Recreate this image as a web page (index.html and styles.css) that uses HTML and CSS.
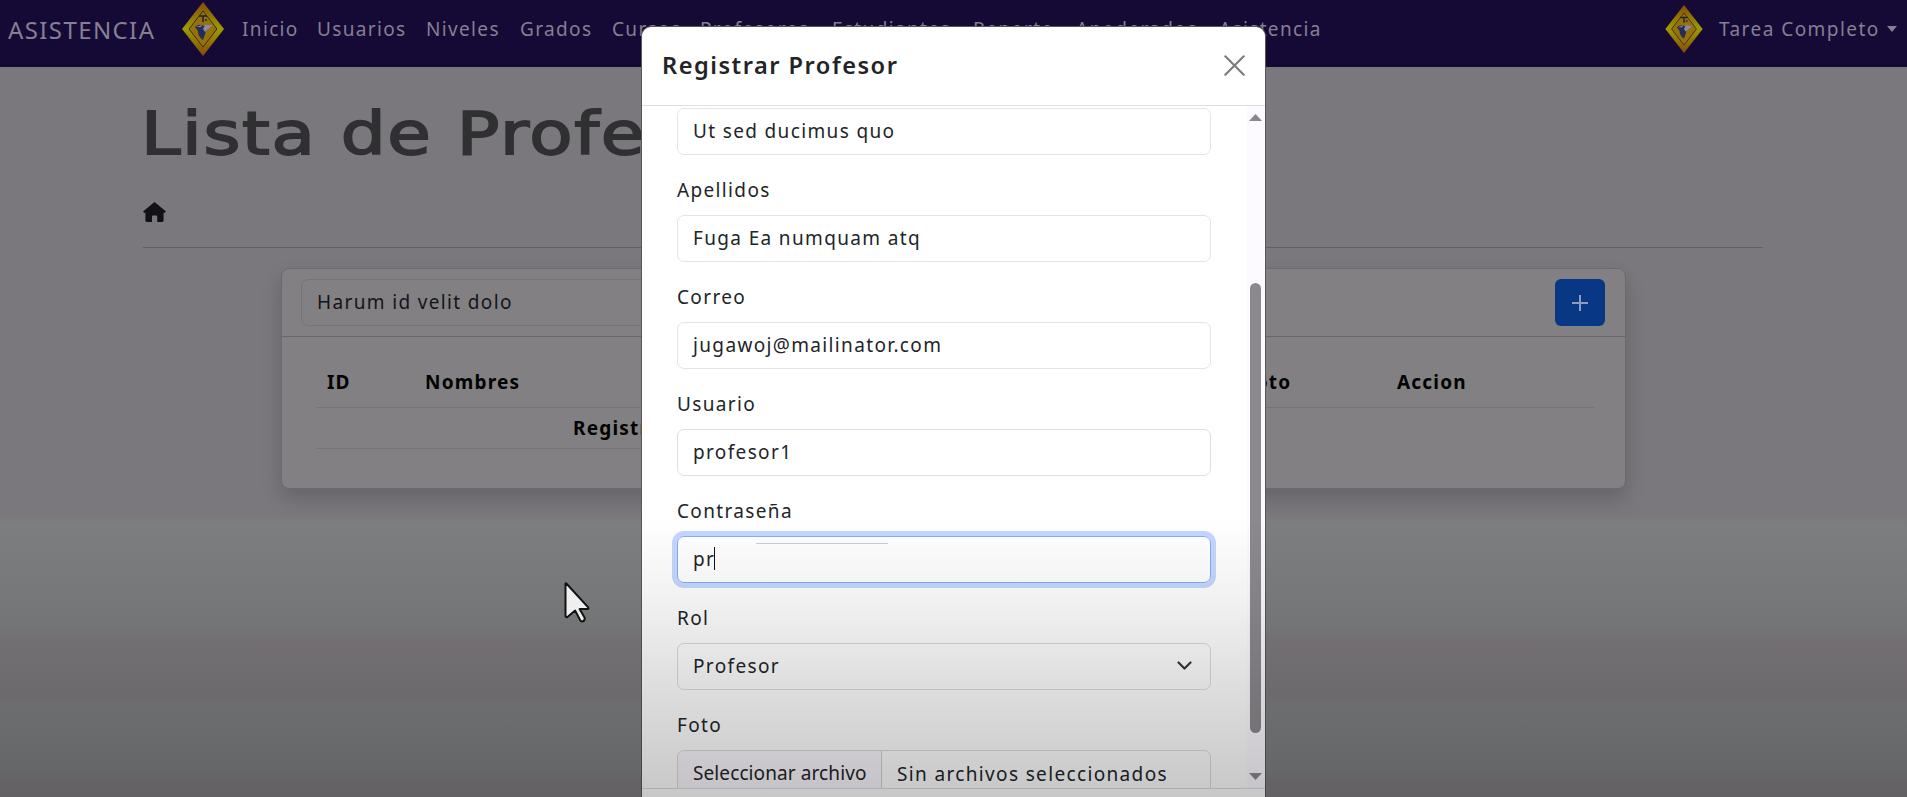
FILE: index.html
```html
<!DOCTYPE html>
<html lang="es">
<head>
<meta charset="utf-8">
<title>Asistencia</title>
<link rel="stylesheet" href="styles.css">
</head>
<body>
<svg class="defs" width="0" height="0">
  <defs>
    <linearGradient id="gold" x1="0" y1="0" x2="0" y2="1">
      <stop offset="0" stop-color="#88490b"/>
      <stop offset=".5" stop-color="#9c9b05"/>
      <stop offset="1" stop-color="#884808"/>
    </linearGradient>
    <symbol id="crest" viewBox="0 0 42 54">
      <path d="M21 0 42 27 21 54 0 27z" fill="url(#gold)"/>
      <path d="M21 9 35 27 21 45 7 27z" fill="#96710c" stroke="#38300f" stroke-width="1"/>
      <path d="M17 14h8M21 14v6M23 18h2" stroke="#20242c" stroke-width="1.6" fill="none"/>
      <path d="M13 25q4-4 9-1l8-1-6 6-3 9q-5-3-5-9z" fill="#252d57"/>
      <path d="M23 23l8 0-8 7-2-3zM14 25l6-2-1 2z" fill="#8b8b9c"/>
    </symbol>
  </defs>
</svg>
<div class="page">
  <nav class="navbar">
    <span class="brand">ASISTENCIA</span>
    <svg class="crest"><use href="#crest"/></svg>
    <div class="links">
      <span>Inicio</span><span>Usuarios</span><span>Niveles</span><span>Grados</span><span>Cursos</span><span>Profesores</span><span>Estudiantes</span><span>Reporte</span><span>Apoderados</span><span>Asistencia</span>
    </div>
    <div class="account">
      <svg class="avatar"><use href="#crest"/></svg>
      <span>Tarea Completo</span>
      <i class="caret"></i>
    </div>
  </nav>
  <main class="content">
    <h1 class="title">Lista de Profesores</h1>
    <svg class="home" viewBox="0 0 23 20"><path d="M11.5 0 23 9.6 21.6 11 20.6 10.4V18.6Q20.6 20 19.2 20H14.2V14.2Q14.2 13.4 13.4 13.4H9.8Q9 13.4 9 14.2V20H3.8Q2.4 20 2.4 18.6V10.4L1.4 11 0 9.6z" fill="#121116"/></svg>
    <hr class="rule">
    <section class="card">
      <header class="card-head">
        <div class="search">Harum id velit dolo</div>
        <button class="add"><svg width="18" height="18" viewBox="0 0 18 18"><path d="M9 1v16M1 9h16" stroke="#8c9cba" stroke-width="2"/></svg></button>
      </header>
      <div class="table">
        <div class="row head"><span>ID</span><span>Nombres</span><span>Correo</span><span>Foto</span><span>Accion</span></div>
        <div class="row empty">Registros</div>
      </div>
    </section>
  </main>
</div>

<div class="modal">
  <header class="modal-head">
    <h2 class="modal-title">Registrar Profesor</h2>
    <svg width="21" height="21" viewBox="0 0 21 21"><path d="M1.3 1.3l18.4 18.4M19.7 1.3L1.3 19.7" stroke="#7d7d7d" stroke-width="2.2" stroke-linecap="round"/></svg>
  </header>
  <div class="modal-body">
    <form class="form">
      <div class="control">Ut sed ducimus quo</div>
      <label class="label">Apellidos</label>
      <div class="control">Fuga Ea numquam atq</div>
      <label class="label">Correo</label>
      <div class="control">jugawoj@mailinator.com</div>
      <label class="label">Usuario</label>
      <div class="control lilac">profesor1</div>
      <label class="label">Contraseña</label>
      <div class="control focus">pr<i class="text-cursor"></i><i class="hint"></i></div>
      <label class="label">Rol</label>
      <div class="control select">Profesor<svg width="15" height="10" viewBox="0 0 15 10"><path d="M1.5 1.5l6 6 6-6" fill="none" stroke="#343a40" stroke-width="2.2" stroke-linecap="round" stroke-linejoin="round"/></svg></div>
      <label class="label">Foto</label>
      <div class="control file"><span class="pick">Seleccionar archivo</span><span>Sin archivos seleccionados</span></div>
    </form>
    <div class="scroll">
      <svg class="arrow" viewBox="0 0 13 7"><path d="M6.5 0 13 7H0z" fill="#8a888c"/></svg>
      <div class="thumb"></div>
      <svg class="arrow" viewBox="0 0 13 7"><path d="M6.5 7 13 0H0z" fill="#8a888c"/></svg>
    </div>
  </div>
  <footer class="modal-foot"></footer>
</div>
<div class="shade"></div>
<svg class="pointer" viewBox="0 0 26 41"><path d="M1.5 2.2Q1.5.6 2.8 2L24.2 25.4Q25 27 23.2 27H15.6L20.8 36Q21 38.5 18.6 39.4 17 39.6 16.2 38.2L11.2 28.6 3.4 35Q1.5 35.8 1.5 33.6z" fill="#efeff0" stroke="#121212" stroke-width="2" stroke-linejoin="round"/></svg>
</body>
</html>
```
FILE: styles.css
```css
* { box-sizing: border-box; }
body {
  margin: 0;
  width: 1907px;
  height: 797px;
  overflow: hidden;
  position: relative;
  background: linear-gradient(#7a787d 515px, #7d7e7f 525px, #7d7e7f 628px, #7e7a7d 640px, #7e7b7e 697px, #7f8081 708px, #7f8081 770px, #7f7c7f 782px);
  font-family: "Noto Sans", sans-serif;
  font-size: 19px;
  letter-spacing: 1.35px;
  color: #212529;
}
.defs { position: absolute; }
.page { height: 797px; overflow: hidden; }

.navbar {
  height: 67px;
  padding: 0 10px 9px 8px;
  display: flex;
  align-items: center;
  background: #150a35;
  color: #867f92;
  white-space: nowrap;
}
.brand { width: 174px; font-size: 24px; letter-spacing: 1.4px; }
.crest { width: 42px; height: 54px; margin-right: 18px; flex: none; }
.links {
  display: grid;
  grid-template-columns: 75px 109px 94px 92px 88px 132px 141px 103px 143px 110px;
}
.account { margin-left: auto; display: flex; align-items: center; }
.avatar { width: 38px; height: 48px; margin-right: 16px; }
.account span { width: 168px; letter-spacing: 1.45px; }
.caret {
  border: 5.5px solid transparent;
  border-top: 6px solid #867f92;
  border-bottom: 0;
}

.content { padding: 0 144px 0 143px; }
.title {
  margin: 0;
  padding-top: 32px;
  height: 135px;
  font: 400 59px/70px "DejaVu Sans", sans-serif;
  letter-spacing: 1.4px;
  color: #303033;
  -webkit-text-stroke: 1.8px #303033;
  transform: scaleX(1.2);
  transform-origin: left;
  white-space: nowrap;
  margin-left: -2px;
}
.home { display: block; width: 23px; height: 20px; }
.rule { margin: 25px 0 20px; border: 0; border-top: 1px solid #605f64; }

.card {
  width: 1345px;
  height: 221px;
  margin-left: 138px;
  border: 1px solid #6c6a6e;
  border-radius: 8px;
  background: #828082;
  box-shadow: 0 10px 20px rgba(0, 0, 0, .17);
}
.card-head {
  height: 68px;
  padding: 10px 20px 10px 19px;
  display: flex;
  justify-content: space-between;
  border-bottom: 1px solid #68666a;
}
.search {
  width: 620px;
  height: 47px;
  padding-left: 15px;
  line-height: 45px;
  border: 1px solid #757377;
  border-radius: 7px;
  color: #15141a;
}
.add {
  width: 50px;
  height: 47px;
  padding: 0;
  border: 0;
  border-radius: 6px;
  background: #083885;
  display: grid;
  place-items: center;
}
.table { padding: 30px 31px 0 34px; color: #020203; font-weight: 700; letter-spacing: 1.2px; }
.row { border-bottom: 1px solid #767477; line-height: 41px; height: 41px; }
.head {
  display: grid;
  grid-template-columns: 98px 400px 419px 153px 1fr;
  padding-left: 11px;
  line-height: 30px;
}
.empty { padding-left: 257px; width: 800px; }

.modal {
  position: absolute;
  left: 642px;
  top: 27px;
  width: 623px;
  height: 790px;
  border-radius: 9px;
  background: #fff;
  overflow: hidden;
  box-shadow: 0 0 0 1px #59575c;
}
.modal-head {
  height: 79px;
  padding: 0 20px 2px;
  display: flex;
  align-items: center;
  justify-content: space-between;
  border-bottom: 1px solid #dedfe2;
}
.modal-title { margin: 0; font-size: 23.6px; font-weight: 600; letter-spacing: 1.5px; color: #232427; }
.modal-body { height: 682px; display: flex; overflow: hidden; }
.form { flex: 1; padding: 3px 36px 0 35px; }
.control {
  height: 47px;
  padding: 0 15px 2px;
  display: flex;
  align-items: center;
  position: relative;
  border: 1px solid #e3e4e7;
  border-radius: 7px;
  white-space: nowrap;
}
.label { display: block; height: 60px; padding-top: 14px; line-height: 42px; }
.form { margin-top: -1px; }
.lilac { border-color: #dedcf2; }
.focus { border-color: #86aef0; box-shadow: 0 0 0 5px #c3d7ff; }
.text-cursor { width: 1px; height: 23px; margin-left: -1px; background: #111; }
.hint {
  position: absolute;
  left: 78px;
  top: 6px;
  width: 132px;
  height: 1px;
  background: #cdc6df;
}
.select { justify-content: space-between; padding-right: 18px; border-color: #dbdcdf; }
.file { padding: 0; border-color: #dbdcdf; }
.pick {
  width: 204px;
  height: 45px;
  padding-left: 15px;
  margin-right: 15px;
  line-height: 44px;
  letter-spacing: .1px;
  border-right: 1px solid #d3d3d8;
  border-radius: 6px 0 0 6px;
  background: #fbf8fd;
}
.scroll {
  width: 18px;
  padding: 8px 0 8px 2px;
  display: flex;
  flex-direction: column;
  justify-content: space-between;
  background: #fcfaff;
}
.arrow { width: 13px; height: 7px; }
.thumb { width: 11px; height: 450px; margin: 162px 0 auto 1px; border-radius: 6px; background: #8b898d; }
.modal-foot { border-top: 1px solid #dedfe2; }

.shade {
  position: absolute;
  left: 0;
  top: 517px;
  width: 1907px;
  height: 280px;
  background: linear-gradient(rgba(0, 0, 0, 0), rgba(0, 0, 0, .05) 28%, rgba(0, 0, 0, .13) 60%, rgba(0, 0, 0, .22));
}
.pointer { position: absolute; left: 564px; top: 582px; width: 26px; height: 41px; }
```
